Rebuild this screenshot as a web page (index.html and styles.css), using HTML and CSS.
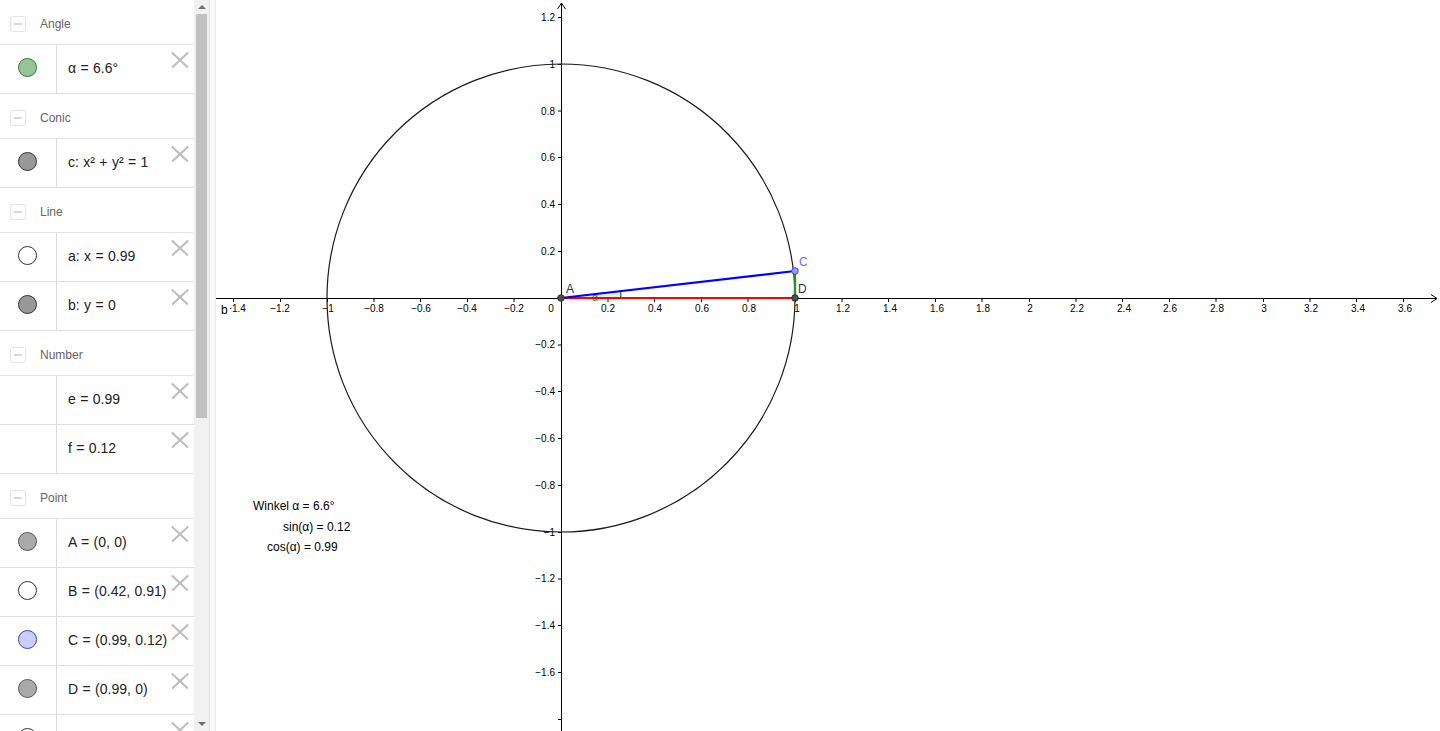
FILE: index.html
```html
<!DOCTYPE html>
<html>
<head>
<meta charset="utf-8">
<link rel="stylesheet" href="styles.css">
</head>
<body>
<div class="app">
  <div class="algebra">
    <div class="list">
      <div class="header"><span class="toggle"></span><span class="cat">Angle</span></div>
      <div class="row"><div class="marker"><span class="dot dot-green"></span></div><div class="expr">α = 6.6°</div><span class="del"></span></div>
      <div class="header"><span class="toggle"></span><span class="cat">Conic</span></div>
      <div class="row"><div class="marker"><span class="dot dot-dark"></span></div><div class="expr">c: x² + y² = 1</div><span class="del"></span></div>
      <div class="header"><span class="toggle"></span><span class="cat">Line</span></div>
      <div class="row"><div class="marker"><span class="dot dot-white"></span></div><div class="expr">a: x = 0.99</div><span class="del"></span></div>
      <div class="row"><div class="marker"><span class="dot dot-dark"></span></div><div class="expr">b: y = 0</div><span class="del"></span></div>
      <div class="header"><span class="toggle"></span><span class="cat">Number</span></div>
      <div class="row"><div class="marker"></div><div class="expr">e = 0.99</div><span class="del"></span></div>
      <div class="row"><div class="marker"></div><div class="expr">f = 0.12</div><span class="del"></span></div>
      <div class="header"><span class="toggle"></span><span class="cat">Point</span></div>
      <div class="row"><div class="marker"><span class="dot dot-light"></span></div><div class="expr">A = (0, 0)</div><span class="del"></span></div>
      <div class="row"><div class="marker"><span class="dot dot-white"></span></div><div class="expr">B = (0.42, 0.91)</div><span class="del"></span></div>
      <div class="row"><div class="marker"><span class="dot dot-blue"></span></div><div class="expr">C = (0.99, 0.12)</div><span class="del"></span></div>
      <div class="row"><div class="marker"><span class="dot dot-light"></span></div><div class="expr">D = (0.99, 0)</div><span class="del"></span></div>
      <div class="row"><div class="marker"><span class="dot dot-white"></span></div><div class="expr"></div><span class="del"></span></div>
    </div>
  </div>
  <div class="scrollbar">
    <div class="sb-btn"><span class="tri-up"></span></div>
    <div class="thumb"></div>
    <div class="sb-space"></div>
    <div class="sb-btn"><span class="tri-down"></span></div>
  </div>
  <div class="splitter"></div>
  <div class="graphics">
    <svg class="canvas" viewBox="216 0 1224 731" xmlns="http://www.w3.org/2000/svg">
      <g stroke="#000" stroke-width="1" fill="none">
        <line x1="216" y1="298.5" x2="1437" y2="298.5"/>
        <polyline points="1431,294.5 1437,298.5 1431,302.5"/>
        <line x1="561.5" y1="731" x2="561.5" y2="3"/>
        <polyline points="557.5,9 561.5,3 565.5,9"/>
      </g>
      <g stroke="#000" stroke-width="1">
        <line x1="233.5" y1="298" x2="233.5" y2="302"/>
        <line x1="280.5" y1="298" x2="280.5" y2="302"/>
        <line x1="327.5" y1="298" x2="327.5" y2="302"/>
        <line x1="374" y1="298" x2="374" y2="302"/>
        <line x1="420.5" y1="298" x2="420.5" y2="302"/>
        <line x1="467.5" y1="298" x2="467.5" y2="302"/>
        <line x1="514" y1="298" x2="514" y2="302"/>
        <line x1="608" y1="298" x2="608" y2="302"/>
        <line x1="654.5" y1="298" x2="654.5" y2="302"/>
        <line x1="701.5" y1="298" x2="701.5" y2="302"/>
        <line x1="748" y1="298" x2="748" y2="302"/>
        <line x1="795.5" y1="298" x2="795.5" y2="302"/>
        <line x1="842" y1="298" x2="842" y2="302"/>
        <line x1="888.5" y1="298" x2="888.5" y2="302"/>
        <line x1="935.5" y1="298" x2="935.5" y2="302"/>
        <line x1="982" y1="298" x2="982" y2="302"/>
        <line x1="1029.5" y1="298" x2="1029.5" y2="302"/>
        <line x1="1076" y1="298" x2="1076" y2="302"/>
        <line x1="1122.5" y1="298" x2="1122.5" y2="302"/>
        <line x1="1169.5" y1="298" x2="1169.5" y2="302"/>
        <line x1="1216" y1="298" x2="1216" y2="302"/>
        <line x1="1263.5" y1="298" x2="1263.5" y2="302"/>
        <line x1="1310" y1="298" x2="1310" y2="302"/>
        <line x1="1356.5" y1="298" x2="1356.5" y2="302"/>
        <line x1="1403.5" y1="298" x2="1403.5" y2="302"/>

        <line x1="558" y1="17.5" x2="561" y2="17.5"/>
        <line x1="558" y1="64.5" x2="561" y2="64.5"/>
        <line x1="558" y1="111" x2="561" y2="111"/>
        <line x1="558" y1="157.5" x2="561" y2="157.5"/>
        <line x1="558" y1="204.5" x2="561" y2="204.5"/>
        <line x1="558" y1="251.5" x2="561" y2="251.5"/>
        <line x1="558" y1="345" x2="561" y2="345"/>
        <line x1="558" y1="391.5" x2="561" y2="391.5"/>
        <line x1="558" y1="438.5" x2="561" y2="438.5"/>
        <line x1="558" y1="485.5" x2="561" y2="485.5"/>
        <line x1="558" y1="532.5" x2="561" y2="532.5"/>
        <line x1="558" y1="579" x2="561" y2="579"/>
        <line x1="558" y1="625.5" x2="561" y2="625.5"/>
        <line x1="558" y1="672.5" x2="561" y2="672.5"/>
        <line x1="558" y1="719.5" x2="561" y2="719.5"/>
      </g>
      <g class="ticklabel" text-anchor="middle">
        <text x="236" y="312">−1.4</text>
        <text x="280" y="312">−1.2</text>
        <text x="328" y="312">−1</text>
        <text x="374" y="312">−0.8</text>
        <text x="421" y="312">−0.6</text>
        <text x="467" y="312">−0.4</text>
        <text x="514" y="312">−0.2</text>
        <text x="551" y="312">0</text>
        <text x="608" y="312">0.2</text>
        <text x="655" y="312">0.4</text>
        <text x="702" y="312">0.6</text>
        <text x="749" y="312">0.8</text>
        <text x="797" y="312">1</text>
        <text x="843" y="312">1.2</text>
        <text x="890" y="312">1.4</text>
        <text x="937" y="312">1.6</text>
        <text x="983" y="312">1.8</text>
        <text x="1030" y="312">2</text>
        <text x="1077" y="312">2.2</text>
        <text x="1124" y="312">2.4</text>
        <text x="1170" y="312">2.6</text>
        <text x="1217" y="312">2.8</text>
        <text x="1264" y="312">3</text>
        <text x="1311" y="312">3.2</text>
        <text x="1358" y="312">3.4</text>
        <text x="1405" y="312">3.6</text>
      </g>
      <g class="ticklabel" text-anchor="end">
        <text x="555" y="21">1.2</text>
        <text x="555" y="68">1</text>
        <text x="555" y="115">0.8</text>
        <text x="555" y="161">0.6</text>
        <text x="555" y="208">0.4</text>
        <text x="555" y="255">0.2</text>
        <text x="555" y="348">−0.2</text>
        <text x="555" y="395">−0.4</text>
        <text x="555" y="442">−0.6</text>
        <text x="555" y="489">−0.8</text>
        <text x="555" y="536">−1</text>
        <text x="555" y="582">−1.2</text>
        <text x="555" y="629">−1.4</text>
        <text x="555" y="676">−1.6</text>
      </g>
      <rect x="221" y="304" width="9" height="11" fill="#fff"/>
      <text class="objlabel" x="221" y="314">b</text>
      <circle cx="561" cy="298" r="234" fill="none" stroke="#1a1a1a" stroke-width="1.2"/>
      <path d="M561,298 L621,298 A60,60 0 0,0 620.6,291.1 Z" fill="rgba(0,100,0,0.1)" stroke="none"/>
      <path d="M621,298 A60,60 0 0,0 620.6,291.1" fill="none" stroke="#2e7d32" stroke-width="1"/>
      <line x1="620.6" y1="298" x2="620.6" y2="291.5" stroke="#2e7d32" stroke-width="1"/>
      <text class="anglabel" x="592" y="301">α</text>
      <line x1="561" y1="298" x2="795" y2="298" stroke="#ff0000" stroke-width="2.2"/>
      <line x1="795" y1="271" x2="795" y2="298" stroke="#2e8b2e" stroke-width="2.4"/>
      <line x1="561" y1="298" x2="795" y2="271" stroke="#0000ff" stroke-width="2.2"/>
      <circle cx="561" cy="298" r="3.3" fill="#4d4d4d" stroke="#222" stroke-width="0.8"/>
      <circle cx="795" cy="298" r="3.3" fill="#4d4d4d" stroke="#222" stroke-width="0.8"/>
      <circle cx="795" cy="271" r="3.3" fill="#9a9aff" stroke="#3333aa" stroke-width="0.8"/>
      <text class="objlabel" x="566" y="293" fill="#333">A</text>
      <text class="objlabel" x="799" y="266" fill="#6b6bff">C</text>
      <text class="objlabel" x="798" y="293" fill="#333">D</text>
      <text class="info" x="253" y="510">Winkel α = 6.6°</text>
      <text class="info" x="283" y="531">sin(α) = 0.12</text>
      <text class="info" x="267" y="551">cos(α) = 0.99</text>
    </svg>
  </div>
</div>
</body>
</html>
```
FILE: styles.css
```css
* { box-sizing: border-box; }
html, body {
  margin: 0;
  padding: 0;
  width: 1440px;
  height: 731px;
  overflow: hidden;
  background: #fff;
  font-family: "Liberation Sans", Arial, sans-serif;
}
.app {
  display: flex;
  width: 1440px;
  height: 731px;
}
.algebra {
  width: 194px;
  flex: none;
  height: 731px;
  overflow: hidden;
  background: #fff;
}
.list {
  display: flex;
  flex-direction: column;
}
.header {
  height: 45px;
  flex: none;
  display: flex;
  align-items: center;
  padding-top: 3px;
  border-bottom: 1px solid #e6e6e6;
}
.toggle {
  width: 16px;
  height: 16px;
  margin-left: 10px;
  border: 1px solid #e4e4e4;
  border-radius: 3px;
  position: relative;
  flex: none;
}
.toggle::after {
  content: "";
  position: absolute;
  left: 3px;
  right: 3px;
  top: 6px;
  height: 2px;
  background: #d8d8d8;
}
.cat {
  margin-left: 14px;
  font-size: 12px;
  color: #666;
}
.row {
  height: 49px;
  flex: none;
  display: flex;
  border-bottom: 1px solid #e0e0e0;
}
.marker {
  width: 57px;
  flex: none;
  border-right: 1px solid #dcdcdc;
  display: flex;
  align-items: center;
  justify-content: center;
  padding-right: 1px;
  padding-bottom: 4px;
}
.dot {
  width: 19px;
  height: 19px;
  border-radius: 50%;
  border: 1px solid #333;
  display: block;
}
.dot-green { background: #99c499; border-color: #2f7a2f; }
.dot-dark { background: #999; border-color: #333; }
.dot-white { background: #fff; border-color: #333; }
.dot-light { background: #aaa; border-color: #555; }
.dot-blue { background: #ccccff; border-color: #3d3dcc; }
.expr {
  flex: 1;
  display: flex;
  align-items: center;
  padding-left: 11px;
  padding-bottom: 3px;
  font-size: 14px;
  word-spacing: 0.5px;
  color: #222;
  white-space: nowrap;
  font-family: "Liberation Sans", Arial, sans-serif;
}
.del {
  width: 17px;
  height: 16px;
  flex: none;
  margin-top: 7px;
  margin-right: 5px;
  position: relative;
}
.del::before, .del::after {
  content: "";
  position: absolute;
  left: -3px;
  top: 7px;
  width: 22px;
  height: 1.5px;
  background: #bdbdbd;
  transform: rotate(43deg);
}
.del::after { transform: rotate(-43deg); }
.scrollbar {
  width: 15px;
  flex: none;
  height: 731px;
  background: #f1f1f1;
  display: flex;
  flex-direction: column;
  align-items: center;
}
.sb-btn {
  height: 14px;
  width: 15px;
  display: flex;
  align-items: center;
  justify-content: center;
  flex: none;
}
.tri-up {
  width: 0; height: 0;
  border-left: 4px solid transparent;
  border-right: 4px solid transparent;
  border-bottom: 4px solid #6e6e6e;
}
.tri-down {
  width: 0; height: 0;
  border-left: 4px solid transparent;
  border-right: 4px solid transparent;
  border-top: 4px solid #6e6e6e;
}
.thumb {
  width: 11px;
  height: 404px;
  background: #c1c1c1;
  flex: none;
}
.sb-space { flex: 1; }
.splitter {
  width: 7px;
  flex: none;
  height: 731px;
  background: #f8f8f8;
  border-left: 1px solid #e2e2e2;
  border-right: 1px solid #e8e8e8;
}
.graphics {
  flex: 1;
  height: 731px;
  overflow: hidden;
}
.canvas {
  display: block;
  width: 1224px;
  height: 731px;
}
.ticklabel {
  font-family: "Liberation Sans", Arial, sans-serif;
  font-size: 10px;
  fill: #000;
}
.objlabel {
  font-family: "Liberation Sans", Arial, sans-serif;
  font-size: 12px;
}
.anglabel {
  font-family: "Liberation Sans", Arial, sans-serif;
  font-size: 10px;
  fill: #2e7d32;
}
.info {
  font-family: "Liberation Sans", Arial, sans-serif;
  font-size: 12px;
  fill: #000;
}
```
